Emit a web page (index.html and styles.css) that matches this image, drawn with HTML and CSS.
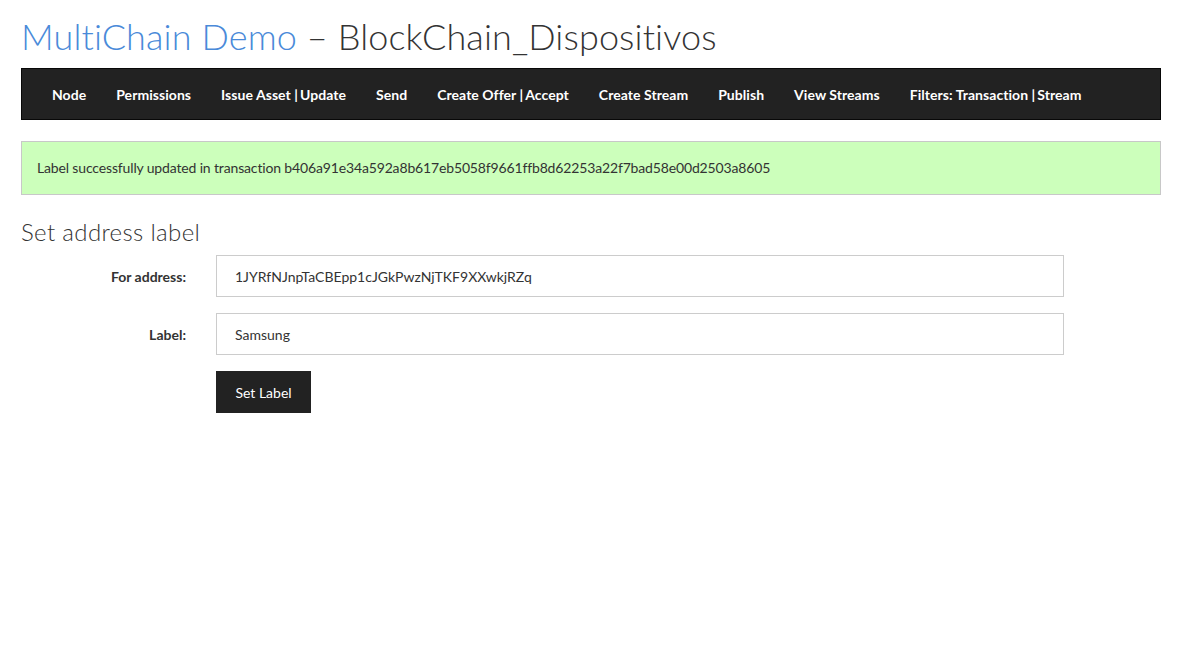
FILE: index.html
```html
<!DOCTYPE html>
<html>
<head>
<meta charset="utf-8">
<link rel="stylesheet" href="styles.css">
</head>
<body>
<div class="container">
  <h1 class="title"><a class="brand" href="#">MultiChain Demo</a> – BlockChain_Dispositivos</h1>
  <nav class="navbar">
    <ul class="nav">
      <li><a href="#">Node</a></li>
      <li><a href="#">Permissions</a></li>
      <li><a href="#">Issue Asset</a><span class="sep"> |</span><a href="#">Update</a></li>
      <li><a href="#">Send</a></li>
      <li><a href="#">Create Offer</a><span class="sep"> |</span><a href="#">Accept</a></li>
      <li><a href="#">Create Stream</a></li>
      <li><a href="#">Publish</a></li>
      <li><a href="#">View Streams</a></li>
      <li><a href="#">Filters: Transaction</a><span class="sep"> |</span><a href="#">Stream</a></li>
    </ul>
  </nav>
  <div class="alert">Label successfully updated in transaction b406a91e34a592a8b617eb5058f9661ffb8d62253a22f7bad58e00d2503a8605</div>
  <h3 class="section-title">Set address label</h3>
  <form class="form">
    <div class="form-row">
      <label class="form-label">For address:</label>
      <div class="form-field"><input class="input" type="text" value="1JYRfNJnpTaCBEpp1cJGkPwzNjTKF9XXwkjRZq"></div>
    </div>
    <div class="form-row">
      <label class="form-label">Label:</label>
      <div class="form-field"><input class="input" type="text" value="Samsung"></div>
    </div>
    <div class="form-row">
      <div class="form-label"></div>
      <div class="form-field"><button class="btn" type="button">Set Label</button></div>
    </div>
  </form>
</div>
</body>
</html>
```

FILE: styles.css
```css
* { box-sizing: border-box; }
html, body { margin: 0; padding: 0; background: #fff; }
body {
  font-family: "Lato", "Open Sans", sans-serif;
  font-size: 14px;
  color: #333;
}
.container {
  width: 1140px;
  margin: 0 0 0 21px;
  padding: 0;
}
.title {
  margin: 0;
  padding-top: 16px;
  height: 68px;
  font-size: 36px;
  font-weight: 300;
  line-height: 40px;
  color: #333;
  letter-spacing: 0.12px;
}
.brand { color: #4a8ad9; text-decoration: none; }
.navbar {
  background: #222;
  border: 1px solid #080808;
  height: 52px;
  display: flex;
  align-items: center;
  padding: 0 15px;
}
.nav {
  list-style: none;
  margin: 0;
  padding: 0;
  display: flex;
}
.nav li { padding: 0 15px; color: #fff; font-weight: 700; white-space: nowrap; letter-spacing: 0.05px; }
.nav a { color: #fff; text-decoration: none; }
.sep { color: #fff; margin-right: 2px; }
.alert {
  margin-top: 21px;
  background: #ccffbb;
  border: 1px solid #c8c8c8;
  padding: 16px 15px;
  line-height: 20px;
  color: #333;
  letter-spacing: -0.15px;
}
.section-title {
  margin: 22px 0 8px 0;
  font-size: 24px;
  font-weight: 300;
  line-height: 30px;
  letter-spacing: 0.35px;
}
.form { margin-left: -15px; }
.form-row {
  display: flex;
  align-items: center;
  margin-bottom: 16px;
}
.form-label {
  width: 195px;
  padding: 0 15px;
  text-align: right;
  font-weight: 700;
}
.form-field { width: 878px; padding: 0 15px; }
.input {
  display: block;
  width: 848px;
  height: 42px;
  border: 1px solid #ccc;
  padding: 0 18px;
  font-family: inherit;
  font-size: 14px;
  color: #333;
  background: #fff;
}
.btn {
  display: block;
  background: #222;
  color: #fff;
  border: none;
  height: 42px;
  width: 95px;
  padding: 0;
  text-align: center;
  font-family: inherit;
  font-size: 14px;
}
```
